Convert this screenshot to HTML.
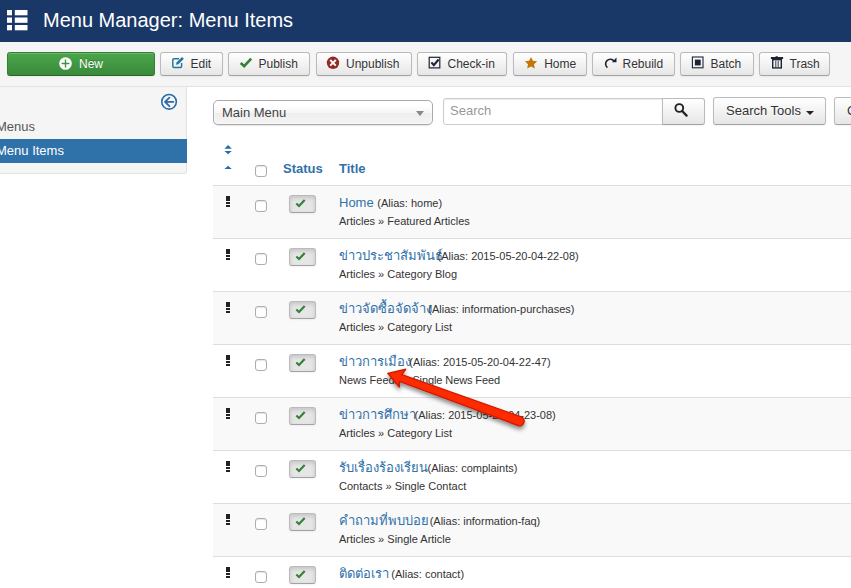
<!DOCTYPE html>
<html lang="en">
<head>
<meta charset="utf-8">
<title>Menu Manager: Menu Items</title>
<style>
*{box-sizing:border-box;margin:0;padding:0}
html,body{width:851px;height:588px;overflow:hidden;background:#fff}
body{font-family:"Liberation Sans",sans-serif;font-size:13px;line-height:18px;color:#333;position:relative}
a{color:#3071a9;text-decoration:none}
.abs{position:absolute}
/* header */
#header{position:absolute;left:0;top:0;width:851px;height:42px;background:#1a3867}
#header h1{position:absolute;left:43px;top:8px;font-size:20px;line-height:24px;font-weight:normal;color:#fff;white-space:nowrap}
#header svg{position:absolute;left:7px;top:10px}
/* toolbar */
#subhead{position:absolute;left:0;top:42px;width:851px;height:45px;background:#f5f5f5;border-bottom:1px solid #e3e3e3}
.btn{position:absolute;height:24px;border:1px solid #bbb;border-bottom-color:#a2a2a2;border-radius:3px;
 background:linear-gradient(#ffffff,#e6e6e6);font-size:12px;line-height:18px;padding:2px 0 0 0;color:#333;white-space:nowrap;
 text-shadow:0 1px 1px rgba(255,255,255,.75);box-shadow:inset 0 1px 0 rgba(255,255,255,.2),0 1px 2px rgba(0,0,0,.05)}
.btn svg{position:absolute}
.btn span{position:absolute;top:2px}
#subhead .btn{top:10px}
.btn.new{background:linear-gradient(#4aa64a,#3a8a3a);border-color:#358035 #358035 #2a662a;color:#fff;text-shadow:0 -1px 0 rgba(0,0,0,.25)}
/* sidebar */
#sidebar{position:absolute;left:0;top:87px;width:187px;height:87px;background:#f5f5f5;border-right:1px solid #e3e3e3;border-bottom:1px solid #e3e3e3;border-radius:0 0 3px 0}
#sidebar .m{position:absolute;left:-4px;font-size:13px;line-height:18px;color:#555}
#sidebar .act{position:absolute;left:0;top:52px;width:187px;height:24px;background:#2f71a9}
#sidebar .act span{position:absolute;left:-4px;top:3px;color:#fff}
/* filter bar */
.sel{position:absolute;left:213px;top:100px;width:220px;height:25px;border:1px solid #aaa;border-radius:5px;background:linear-gradient(#fff 20%,#f6f6f6 50%,#eee 52%,#f4f4f4 100%);box-shadow:0 0 3px #fff inset,0 1px 1px rgba(0,0,0,.1);}
.sel span{position:absolute;left:8px;top:3px;color:#444}
.sel i{position:absolute;right:8px;top:9.5px;width:0;height:0;border:4px solid transparent;border-top:5px solid #888;border-bottom:0}
.search{position:absolute;left:443px;top:98px;width:219.5px;height:27px;border:1px solid #ccc;border-radius:3px 0 0 3px;background:#fff;box-shadow:inset 0 1px 1px rgba(0,0,0,.075)}
.search span{position:absolute;left:6px;top:3px;color:#999;font-size:13px}
.btn.big{height:28px;font-size:13px}
.caret{position:absolute;left:91.5px;top:12.5px;width:0;height:0;border:4px solid transparent;border-top:4px solid #222;border-bottom:0}
/* table */
#tbl{position:absolute;left:213px;top:133px;width:660px}
.hdr{position:absolute;left:0;top:0;height:52px;width:660px}
.hdr b{position:absolute;top:27px;color:#3071a9;font-weight:bold}
.row{position:absolute;left:0;width:660px;height:53px;border-top:1px solid #ddd}
.row.odd{background:#f9f9f9}
.grip{position:absolute;left:13px;top:10px;width:4px;height:11px}
.grip i{position:absolute;left:0;width:3.8px;height:2.4px;background:#222}
.cb{position:absolute;left:42px;width:12px;height:12px;border:1px solid #adadad;border-radius:3px;background:#fff;box-shadow:inset 0 1px 1px rgba(0,0,0,.10)}
.row .cb{top:14px}
.st{position:absolute;left:76px;top:9px;width:27px;height:18px;border:1px solid #bbb;border-bottom-color:#a2a2a2;border-radius:3px;background:#e6e6e6;box-shadow:inset 0 2px 4px rgba(0,0,0,.15),0 1px 2px rgba(0,0,0,.05)}
.st svg{position:absolute;left:5.3px;top:2.9px}
.t1{position:absolute;left:126px;top:8px;white-space:nowrap;line-height:18px}
.t1 a{font-size:13px}
.t1 small{font-size:11px;color:#333}
.t2{position:absolute;left:126px;top:26px;white-space:nowrap;font-size:11px;line-height:18px;color:#333}
.th{display:inline-block;vertical-align:baseline;overflow:visible;white-space:nowrap;line-height:18px;font-family:"Liberation Sans",sans-serif;font-size:13px;color:#3071a9}
</style>
</head>
<body>
<div id="header">
<svg width="21" height="21" viewBox="0 0 21 21"><g fill="#fff"><rect x="0" y="0" width="5" height="5.3"/><rect x="7.8" y="0" width="12.7" height="5.3"/><rect x="0" y="7.5" width="5" height="5.3"/><rect x="7.8" y="7.5" width="12.7" height="5.3"/><rect x="0" y="15" width="5" height="5.3"/><rect x="7.8" y="15" width="12.7" height="5.3"/></g></svg>
<h1>Menu Manager: Menu Items</h1>
</div>
<div id="subhead">
<div class="btn new" style="left:7px;width:148px"><svg style="left:51.2px;top:3.8px" width="13" height="13" viewBox="0 0 13 13"><circle cx="6.5" cy="6.5" r="6.3" fill="#fff"/><path d="M6.5 2.6v7.8M2.6 6.5h7.8" stroke="#3f933f" stroke-width="1.4"/></svg><span style="left:71px">New</span></div>
<div class="btn" style="left:160px;width:63px"><svg style="left:10px;top:3px" width="14" height="14" viewBox="0 0 14 14"><path d="M8 2.7H3Q1.8 2.7 1.8 3.9V10.3Q1.8 11.5 3 11.5H9.4Q10.6 11.5 10.6 10.3V7" fill="none" stroke="#26759b" stroke-width="1.45"/><path d="M5 8.7l.5-2.3 5.5-5.5 1.9 1.9-5.5 5.5z" fill="#26759b"/></svg><span style="left:29.5px">Edit</span></div>
<div class="btn" style="left:228px;width:82px"><svg style="left:10px;top:3px" width="14" height="14" viewBox="0 0 14 14"><path d="M1.7 6.9l3.5 3.3 7-7.5" fill="none" stroke="#378137" stroke-width="2.7"/></svg><span style="left:29.5px">Publish</span></div>
<div class="btn" style="left:315.5px;width:96px"><svg style="left:9.5px;top:3px" width="14" height="14" viewBox="0 0 14 14"><circle cx="7" cy="6.8" r="6.2" fill="#942a25"/><path d="M4.2 4l5.6 5.6M9.8 4l-5.6 5.6" stroke="#fff" stroke-width="1.9"/></svg><span style="left:29.5px">Unpublish</span></div>
<div class="btn" style="left:417px;width:90px"><svg style="left:10px;top:3px" width="14" height="14" viewBox="0 0 14 14"><rect x="1.2" y="1.3" width="10.6" height="10.6" fill="none" stroke="#1c2333" stroke-width="1.2"/><path d="M3.4 6.4l2.4 2.7 4.8-5.6" fill="none" stroke="#1c2333" stroke-width="2.1"/></svg><span style="left:29.5px">Check-in</span></div>
<div class="btn" style="left:513px;width:74px"><svg style="left:10px;top:3px" width="14" height="14" viewBox="0 0 14 14"><path d="M7 0.9l1.85 3.9 4.25.55-3.1 2.95.8 4.2L7 10.45 3.2 12.5l.8-4.2L.9 5.35l4.25-.55z" fill="#c67605"/></svg><span style="left:30.2px">Home</span></div>
<div class="btn" style="left:592px;width:83px"><svg style="left:10px;top:3px" width="14" height="14" viewBox="0 0 14 14"><path d="M4.4 11.6A4.7 4.7 0 1 1 11 5" fill="none" stroke="#1c2333" stroke-width="1.6"/><path d="M13.5 1.6v4.6H8.9z" fill="#1c2333"/></svg><span style="left:29.5px">Rebuild</span></div>
<div class="btn" style="left:680px;width:74px"><svg style="left:10px;top:3px" width="14" height="14" viewBox="0 0 14 14"><rect x="1.4" y="1" width="10.6" height="10.8" fill="none" stroke="#1c2333" stroke-width="1.1"/><rect x="3.9" y="3.6" width="5.8" height="5.8" fill="#1c2333"/></svg><span style="left:29.5px">Batch</span></div>
<div class="btn" style="left:759px;width:71px"><svg style="left:10px;top:3px" width="14" height="14" viewBox="0 0 14 14"><path d="M5.6 0.3h2.2v.7h5.3v1.9H.9V1h4.7z" fill="#1c2333"/><rect x="2.7" y="3.6" width="8.6" height="8.3" fill="#f4f4f4" stroke="#1c2333" stroke-width="1.4"/><path d="M5.8 4.6v6.4M8.2 4.6v6.4" stroke="#1c2333" stroke-width=".9"/></svg><span style="left:29.5px">Trash</span></div>
</div>
<div id="sidebar">
<svg class="abs" style="left:160px;top:6px" width="18" height="18" viewBox="0 0 18 18"><circle cx="9.05" cy="8.85" r="7.3" fill="none" stroke="#2a6ca9" stroke-width="1.6"/><path d="M13.3 8.9H5.2M9.4 4.6L5 8.9l4.4 4.3" fill="none" stroke="#2a6ca9" stroke-width="1.8" stroke-linecap="round" stroke-linejoin="round"/></svg>
<div class="m" style="top:31px">Menus</div>
<div class="act"><span>Menu Items</span></div>
</div>
<div class="sel"><span>Main Menu</span><i></i></div>
<div class="search"><span>Search</span></div>
<div class="btn big" style="left:661.5px;top:98px;width:43.5px;height:27px;border-radius:0 3px 3px 0"><svg style="left:10.5px;top:3px" width="16" height="16" viewBox="0 0 16 16"><circle cx="6.3" cy="6" r="3.9" fill="none" stroke="#222" stroke-width="1.9"/><path d="M9.2 9l4.4 4.6" stroke="#222" stroke-width="2.3" stroke-linecap="round"/></svg></div>
<div class="btn big" style="left:713px;top:97px;width:112.5px"><span style="left:12px;top:4px">Search Tools</span><i class="caret"></i></div>
<div class="btn big" style="left:834px;top:97px;width:60px"><span style="left:12px;top:4px">Clear</span></div>
<div id="tbl">
<div class="hdr"><svg class="abs" style="left:10px;top:11px" width="10" height="26" viewBox="0 0 10 26"><path d="M1.4 4.7L5.1 .9l3.7 3.8zM1.4 7h7.4L5.1 10.3zM1.4 25L5.1 21.7 8.8 25z" fill="#2a6ca9"/></svg><div class="cb" style="top:32px"></div><b style="left:70px">Status</b><b style="left:126px">Title</b></div>
<div class="row odd" style="top:52px"><div class="grip"><i style="top:.2px"></i><i style="top:3.1px"></i><i style="top:6px"></i><i style="top:8.9px"></i></div><div class="cb"></div><div class="st"><svg width="11" height="9" viewBox="0 0 11 9"><path d="M1.3 4.5l2.7 2.5 5.7-5.9" fill="none" stroke="#378137" stroke-width="2.2"/></svg></div><div class="t1"><a>Home</a> <small>(Alias: home)</small></div><div class="t2">Articles » Featured Articles</div></div>
<div class="row" style="top:105px"><div class="grip"><i style="top:.2px"></i><i style="top:3.1px"></i><i style="top:6px"></i><i style="top:8.9px"></i></div><div class="cb"></div><div class="st"><svg width="11" height="9" viewBox="0 0 11 9"><path d="M1.3 4.5l2.7 2.5 5.7-5.9" fill="none" stroke="#378137" stroke-width="2.2"/></svg></div><div class="t1"><a><span class="th" style="width:94.9px">ข่าวประชาสัมพันธ์</span></a> <small>(Alias: 2015-05-20-04-22-08)</small></div><div class="t2">Articles » Category Blog</div></div>
<div class="row odd" style="top:158px"><div class="grip"><i style="top:.2px"></i><i style="top:3.1px"></i><i style="top:6px"></i><i style="top:8.9px"></i></div><div class="cb"></div><div class="st"><svg width="11" height="9" viewBox="0 0 11 9"><path d="M1.3 4.5l2.7 2.5 5.7-5.9" fill="none" stroke="#378137" stroke-width="2.2"/></svg></div><div class="t1"><a><span class="th" style="width:85.7px">ข่าวจัดซื้อจัดจ้าง</span></a> <small>(Alias: information-purchases)</small></div><div class="t2">Articles » Category List</div></div>
<div class="row" style="top:211px"><div class="grip"><i style="top:.2px"></i><i style="top:3.1px"></i><i style="top:6px"></i><i style="top:8.9px"></i></div><div class="cb"></div><div class="st"><svg width="11" height="9" viewBox="0 0 11 9"><path d="M1.3 4.5l2.7 2.5 5.7-5.9" fill="none" stroke="#378137" stroke-width="2.2"/></svg></div><div class="t1"><a><span class="th" style="width:66.7px">ข่าวการเมือง</span></a> <small>(Alias: 2015-05-20-04-22-47)</small></div><div class="t2">News Feeds » <span style="letter-spacing:-.1px">Single News Feed</span></div></div>
<div class="row odd" style="top:264px"><div class="grip"><i style="top:.2px"></i><i style="top:3.1px"></i><i style="top:6px"></i><i style="top:8.9px"></i></div><div class="cb"></div><div class="st"><svg width="11" height="9" viewBox="0 0 11 9"><path d="M1.3 4.5l2.7 2.5 5.7-5.9" fill="none" stroke="#378137" stroke-width="2.2"/></svg></div><div class="t1"><a><span class="th" style="width:71.9px">ข่าวการศึกษา</span></a> <small>(Alias: 2015-05-20-04-23-08)</small></div><div class="t2">Articles » Category List</div></div>
<div class="row" style="top:317px"><div class="grip"><i style="top:.2px"></i><i style="top:3.1px"></i><i style="top:6px"></i><i style="top:8.9px"></i></div><div class="cb"></div><div class="st"><svg width="11" height="9" viewBox="0 0 11 9"><path d="M1.3 4.5l2.7 2.5 5.7-5.9" fill="none" stroke="#378137" stroke-width="2.2"/></svg></div><div class="t1"><a><span class="th" style="width:84.9px">รับเรื่องร้องเรียน</span></a> <small>(Alias: complaints)</small></div><div class="t2">Contacts » Single Contact</div></div>
<div class="row odd" style="top:370px"><div class="grip"><i style="top:.2px"></i><i style="top:3.1px"></i><i style="top:6px"></i><i style="top:8.9px"></i></div><div class="cb"></div><div class="st"><svg width="11" height="9" viewBox="0 0 11 9"><path d="M1.3 4.5l2.7 2.5 5.7-5.9" fill="none" stroke="#378137" stroke-width="2.2"/></svg></div><div class="t1"><a><span class="th" style="width:87.0px">คำถามที่พบบ่อย</span></a> <small>(Alias: information-faq)</small></div><div class="t2">Articles » Single Article</div></div>
<div class="row" style="top:423px"><div class="grip"><i style="top:.2px"></i><i style="top:3.1px"></i><i style="top:6px"></i><i style="top:8.9px"></i></div><div class="cb"></div><div class="st"><svg width="11" height="9" viewBox="0 0 11 9"><path d="M1.3 4.5l2.7 2.5 5.7-5.9" fill="none" stroke="#378137" stroke-width="2.2"/></svg></div><div class="t1"><a><span class="th" style="width:48.7px">ติดต่อเรา</span></a> <small>(Alias: contact)</small></div><div class="t2">Contacts » Single Contact</div></div>
</div>
<svg class="abs" style="left:0;top:0;pointer-events:none" width="851" height="588" viewBox="0 0 851 588"><defs><filter id="sh" x="-10%" y="-30%" width="120%" height="180%"><feGaussianBlur in="SourceAlpha" stdDeviation="2.2"/><feOffset dx="0" dy="3"/><feComponentTransfer><feFuncA type="linear" slope=".45"/></feComponentTransfer><feMerge><feMergeNode/><feMergeNode in="SourceGraphic"/></feMerge></filter></defs><path filter="url(#sh)" d="M521.27 416.88L401.89 374.71L405.67 369.28L387.80 373.32L399.26 386.95L399.50 381.29L518.13 425.52A4.6 4.6 0 0 0 521.27 416.88Z" fill="#ff2a00" stroke="#c91f00" stroke-width="1.4" stroke-linejoin="round"/></svg>
</body>
</html>
